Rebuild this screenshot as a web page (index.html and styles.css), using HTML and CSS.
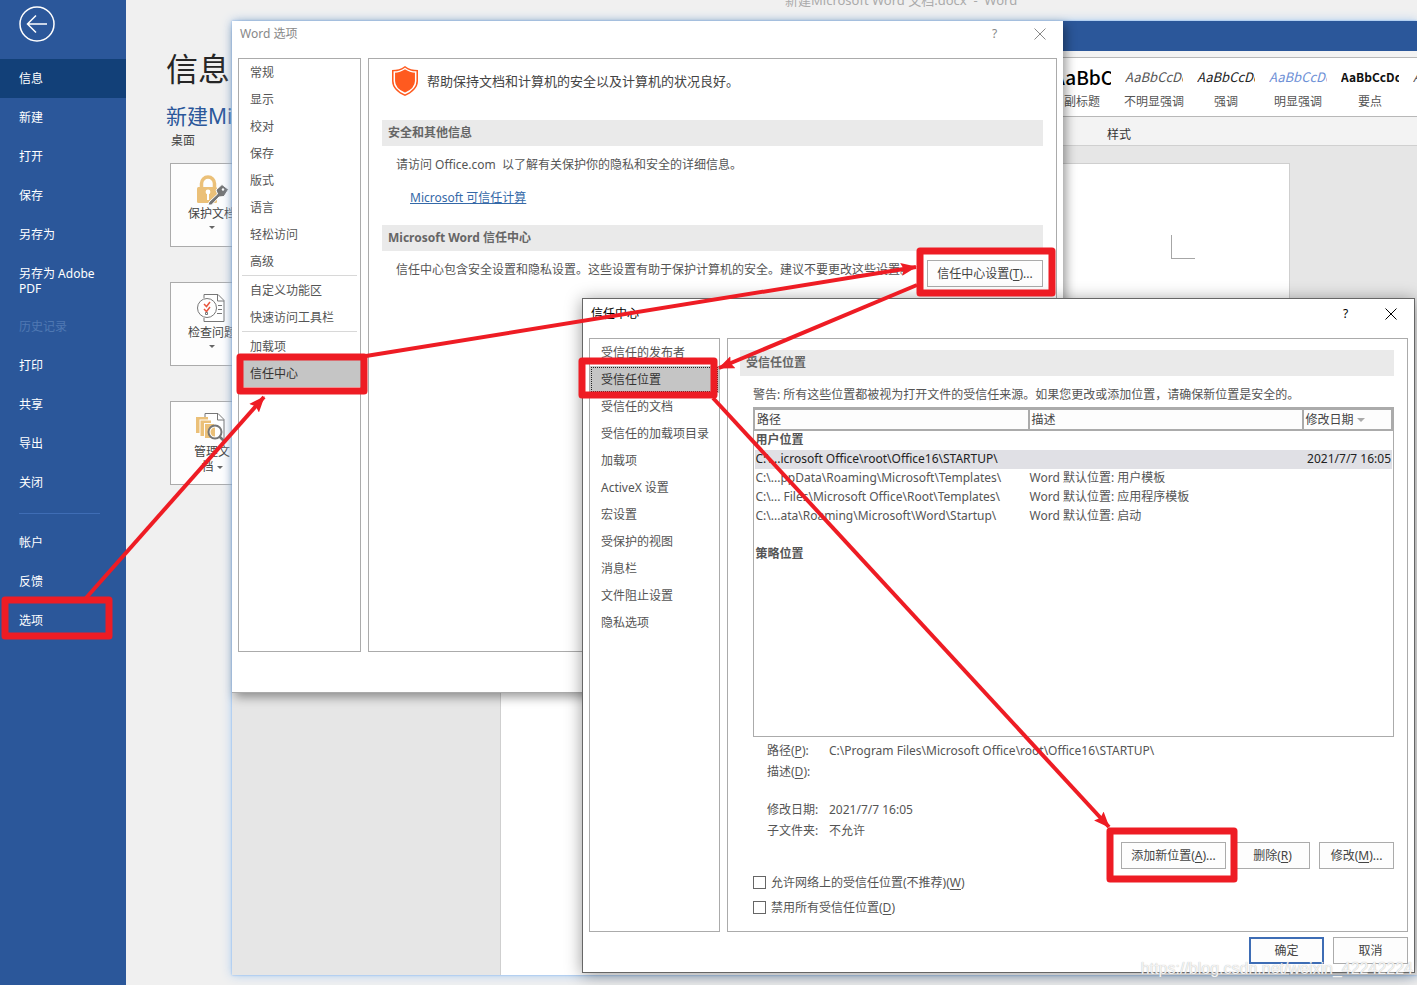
FILE: index.html
```html
<!DOCTYPE html>
<html lang="zh-CN">
<head>
<meta charset="utf-8">
<title>Word 选项</title>
<link rel="stylesheet" href="styles.css">
</head>
<body>
<div class="screen">
  <nav class="sidebar">
    <button class="back" aria-label="返回">
      <svg width="36" height="36" viewBox="0 0 36 36" fill="none" stroke="#fff" stroke-width="1.5"><circle cx="18" cy="18" r="17"/><path d="M28 18H9M17 9.500L8.500 18L17 26.500"/></svg>
    </button>
    <a class="side-item current" href="#">信息</a>
    <a class="side-item" href="#">新建</a>
    <a class="side-item" href="#">打开</a>
    <a class="side-item" href="#">保存</a>
    <a class="side-item" href="#">另存为</a>
    <a class="side-item tall" href="#">另存为 Adobe PDF</a>
    <a class="side-item disabled" href="#">历史记录</a>
    <a class="side-item" href="#">打印</a>
    <a class="side-item" href="#">共享</a>
    <a class="side-item" href="#">导出</a>
    <a class="side-item" href="#">关闭</a>
    <hr class="side-line">
    <a class="side-item" href="#">帐户</a>
    <a class="side-item" href="#">反馈</a>
    <a class="side-item" href="#">选项</a>
  </nav>

  <main class="info">
    <h1>信息</h1>
    <h2>新建Mi</h2>
    <p class="place">桌面</p>
    <button class="card">
      <svg width="34" height="32" viewBox="0 0 34 32"><path d="M6.500 15V9.500a6.500 6.500 0 0 1 13 0V15" fill="none" stroke="#ebc078" stroke-width="3.500"/><rect x="2" y="13" width="20" height="16" rx="1.500" fill="#ebc078"/><circle cx="13" cy="18" r="2.400" fill="#fff"/><path d="M12 18h2v8h-2z" fill="#fff"/><path d="M14 28l8.500-8-1.500-4 6-5.500 6.500 5-4.500 7-5 0.500-7.500 8H13z" fill="#757575" stroke="#fdfdfd"/><circle cx="28" cy="15.500" r="1.200" fill="#fff"/></svg>
      <span>保护文档</span>
      <i class="caret"></i>
    </button>
    <button class="card">
      <svg width="34" height="32" viewBox="0 0 34 32" fill="none" stroke="#777"><path d="M9 5V1.500h14l6 6V28.500H9V25" fill="#fff"/><path d="M22.500 1.500v6.500H29M23 12.500h4M23 16.500h4M22 20.500h5"/><circle cx="12" cy="15" r="9.500" fill="#fff"/><path d="M9 11l2.500 2.500L15 9M9 16l2.500 2.500L15 14" stroke="#e8573f" stroke-width="1.500"/><path d="M10.500 19.500h2v2h-2z"/></svg>
      <span>检查问题</span>
      <i class="caret"></i>
    </button>
    <button class="card">
      <svg width="34" height="32" viewBox="0 0 34 32"><path d="M10 6V1.500h13l6 6V29" fill="#fff" stroke="#777"/><path d="M22.500 1.500v6.500H29" fill="none" stroke="#777"/><path d="M1 5h12v2.500H4.500V21H1z" fill="#ebc078"/><path d="M5.500 8.500H16V11H9v13H5.500z" fill="#ebc078"/><path d="M10 12h9v14h-9z" fill="#ebc078"/><circle cx="20" cy="20" r="6.500" fill="#fff" stroke="#757575" stroke-width="2"/><path d="M20 15.500a4.500 4.500 0 0 0 0 9z" fill="#ebc078"/><path d="M24.500 24.500l6 6" stroke="#757575" stroke-width="2.500"/></svg>
      <span>管理文<br>档 <i class="caret"></i></span>
    </button>
  </main>

  <div class="doc-title">新建Microsoft Word 文档.docx&nbsp; -&nbsp; Word</div>

  <section class="word-window">
    <div class="word-bar"></div>
    <div class="gallery">
      <div class="style"><span class="sample big">AaBbC</span><span>副标题</span></div>
      <div class="style"><span class="sample subtle">AaBbCcDd</span><span>不明显强调</span></div>
      <div class="style"><span class="sample em">AaBbCcDd</span><span>强调</span></div>
      <div class="style"><span class="sample intense">AaBbCcDd</span><span>明显强调</span></div>
      <div class="style"><span class="sample strong">AaBbCcDd</span><span>要点</span></div>
      <div class="style"><span class="sample subtle">A</span></div>
    </div>
    <div class="group-name">样式</div>
    <div class="canvas"><div class="paper"><i class="corner"></i></div></div>
  </section>

  <section class="dialog options" aria-label="Word 选项">
    <header class="title muted">
      <span>Word 选项</span>
      <button class="win-btn" aria-label="帮助">?</button>
      <button class="win-btn" aria-label="关闭"><svg width="12" height="12" viewBox="0 0 12 12" stroke="currentColor"><path d="M0.500 0.500l11 11M11.500 0.500l-11 11"/></svg></button>
    </header>
    <div class="columns">
      <nav class="list">
        <a href="#">常规</a><a href="#">显示</a><a href="#">校对</a><a href="#">保存</a><a href="#">版式</a><a href="#">语言</a><a href="#">轻松访问</a><a href="#">高级</a>
        <hr>
        <a href="#">自定义功能区</a><a href="#">快速访问工具栏</a>
        <hr>
        <a href="#">加载项</a><a href="#" class="selected">信任中心</a>
      </nav>
      <div class="pane">
        <div class="intro">
          <svg width="28" height="32" viewBox="0 0 28 32"><path d="M14 1C10 4 6 5 1 5v11c0 7 6 12 13 15c7-3 13-8 13-15V5C22 5 18 4 14 1z" fill="#ff5a1f"/><path d="M14 3.500C10.500 6 7 7 3.300 7v9c0 6 5 10 10.700 12.500c5.700-2.500 10.700-6.500 10.700-12.500V7C21 7 17.500 6 14 3.500z" fill="none" stroke="#fff" stroke-width="1.500"/></svg>
          <span>帮助保持文档和计算机的安全以及计算机的状况良好。</span>
        </div>
        <h3>安全和其他信息</h3>
        <p class="note">请访问 Office.com&nbsp; 以了解有关保护你的隐私和安全的详细信息。</p>
        <p class="link-row"><a href="#">Microsoft 可信任计算</a></p>
        <h3>Microsoft Word 信任中心</h3>
        <div class="trust-row">
          <p>信任中心包含安全设置和隐私设置。这些设置有助于保护计算机的安全。建议不要更改这些设置。</p>
          <button class="btn">信任中心设置(<u>T</u>)...</button>
        </div>
      </div>
    </div>
  </section>

  <section class="dialog trust" aria-label="信任中心">
    <header class="title">
      <span>信任中心</span>
      <button class="win-btn" aria-label="帮助">?</button>
      <button class="win-btn" aria-label="关闭"><svg width="12" height="12" viewBox="0 0 12 12" stroke="currentColor"><path d="M0.500 0.500l11 11M11.500 0.500l-11 11"/></svg></button>
    </header>
    <div class="columns">
      <nav class="list">
        <a href="#">受信任的发布者</a><a href="#" class="selected focus">受信任位置</a><a href="#">受信任的文档</a><a href="#">受信任的加载项目录</a><a href="#">加载项</a><a href="#">ActiveX 设置</a><a href="#">宏设置</a><a href="#">受保护的视图</a><a href="#">消息栏</a><a href="#">文件阻止设置</a><a href="#">隐私选项</a>
      </nav>
      <div class="pane">
        <h3>受信任位置</h3>
        <div class="locations">
          <p class="warning">警告: 所有这些位置都被视为打开文件的受信任来源。如果您更改或添加位置，请确保新位置是安全的。</p>
          <div class="table-box">
            <table>
              <colgroup><col class="c-path"><col class="c-desc"><col></colgroup>
              <thead><tr><th>路径</th><th>描述</th><th>修改日期 <i class="caret"></i></th></tr></thead>
              <tbody>
                <tr class="group"><td colspan="3">用户位置</td></tr>
                <tr class="picked"><td>C:\...icrosoft Office\root\Office16\STARTUP\</td><td></td><td>2021/7/7 16:05</td></tr>
                <tr><td>C:\...ppData\Roaming\Microsoft\Templates\</td><td>Word 默认位置: 用户模板</td><td></td></tr>
                <tr><td>C:\... Files\Microsoft Office\Root\Templates\</td><td>Word 默认位置: 应用程序模板</td><td></td></tr>
                <tr><td>C:\...ata\Roaming\Microsoft\Word\Startup\</td><td>Word 默认位置: 启动</td><td></td></tr>
                <tr><td colspan="3">&nbsp;</td></tr>
                <tr class="group"><td colspan="3">策略位置</td></tr>
              </tbody>
            </table>
          </div>
          <dl class="details">
            <dt>路径(<u>P</u>):</dt><dd>C:\Program Files\Microsoft Office\root\Office16\STARTUP\</dd>
            <dt>描述(<u>D</u>):</dt><dd></dd>
            <dt class="spaced">修改日期:</dt><dd class="spaced">2021/7/7 16:05</dd>
            <dt>子文件夹:</dt><dd>不允许</dd>
          </dl>
          <div class="actions">
            <button class="btn add">添加新位置(<u>A</u>)...</button>
            <button class="btn">删除(<u>R</u>)</button>
            <button class="btn">修改(<u>M</u>)...</button>
          </div>
          <label class="check"><input type="checkbox"><span>允许网络上的受信任位置(不推荐)(<u>W</u>)</span></label>
          <label class="check"><input type="checkbox"><span>禁用所有受信任位置(<u>D</u>)</span></label>
        </div>
      </div>
    </div>
    <footer class="foot">
      <button class="btn primary">确定</button>
      <button class="btn">取消</button>
    </footer>
  </section>

  <svg class="marks" width="1417" height="985" viewBox="0 0 1417 985">
    <defs><marker id="head" markerUnits="userSpaceOnUse" markerWidth="18" markerHeight="16" refX="15" refY="7" orient="auto"><path d="M0 0.500L16 7L0 13.500L2.500 7z" fill="#ee1c24"/></marker></defs>
    <g fill="none" stroke="#ee1c24" stroke-width="4">
      <path d="M86 598L264 397" marker-end="url(#head)"/>
      <path d="M366 356L916 267" marker-end="url(#head)"/>
      <path d="M917 285L719 368" marker-end="url(#head)"/>
      <path d="M713 398L1109 827" marker-end="url(#head)"/>
    </g>
    <g fill="none" stroke="#ee1c24" stroke-width="7" stroke-linejoin="round">
      <rect x="5" y="600" width="104" height="36"/>
      <rect x="240" y="357" width="124" height="34"/>
      <rect x="920" y="251" width="132" height="42"/>
      <rect x="582" y="361" width="132" height="34"/>
      <rect x="1110" y="831" width="124" height="48"/>
    </g>
  </svg>
  <div class="watermark">https://blog.csdn.net/weixin_42242224</div>
</div>
</body>
</html>
```
FILE: styles.css
```css
* { box-sizing: border-box; }
body {
  margin: 0;
  background: #fff;
  color: #555;
  font: 12px/16px "Noto Sans", "Noto Sans CJK SC", sans-serif;
}
h1, h2, h3, p, dl, dd { margin: 0; }
button { font: inherit; color: inherit; padding: 0; border: 0; background: none; }
a { color: inherit; text-decoration: none; }
u { text-underline-offset: 2px; }

.screen {
  position: relative;
  display: flex;
  margin: 0 5px 3px 0;
  min-height: calc(100vh - 3px);
  background: #f0f0f0;
  overflow: hidden;
}

/* Backstage navigation */
.sidebar { width: 126px; flex: none; background: #2b579a; color: #fff; }
.back { display: block; width: 36px; height: 36px; margin: 6px 0 17px 19px; }
.back svg { display: block; }
.side-item { display: block; padding: 12px 16px 11px 19px; }
.side-item.current { background: #124078; }
.side-item.tall { line-height: 15px; }
.side-item.disabled { color: #5079b3; }
.side-line { height: 1px; margin: 11px 26px 9px 19px; border: 0; background: #3f6db5; }

/* Info page */
.info { flex: 1; padding: 46px 0 0 40px; color: #444; }
h1 { font-size: 32px; font-weight: 400; line-height: 46px; color: #262626; }
h2 { font-size: 21px; font-weight: 400; line-height: 32px; margin-top: 8px; color: #2b579a; }
.place { margin: 1px 0 0 5px; }
.card {
  display: flex;
  flex-direction: column;
  align-items: center;
  width: 84px;
  height: 84px;
  margin: 0 0 35px 4px;
  padding-top: 10px;
  border: 1px solid #ababab;
  background: #fdfdfd;
  line-height: 15px;
}
.place + .card { margin-top: 14px; }
.card svg { flex: none; }
.card .caret { margin-top: 5px; }
.caret {
  display: inline-block;
  border: 3px solid transparent;
  border-top-color: #666;
  border-bottom: 0;
  vertical-align: middle;
}
.card span .caret { margin-top: 0; }
.doc-title {
  position: absolute;
  top: -9px;
  left: 785px;
  font-size: 13px;
  line-height: 18px;
  color: #aaa;
}

/* Document window */
.word-window {
  position: absolute;
  inset: 21px 0 10px 232px;
  display: flex;
  flex-direction: column;
  background: #f3f3f3;
  box-shadow: 0 0 2px #7db4f5, 0 0 10px #a9c9ee;
}
.word-bar { height: 30px; background: #2b579a; }
.gallery {
  display: flex;
  height: 60px;
  margin-top: 6px;
  padding: 9px 0 0 814px;
  border: solid #b8b8b8;
  border-width: 1px 0;
  background: #fff;
  overflow: hidden;
}
.style { display: flex; flex-direction: column; align-items: center; flex: none; width: 72px; }
.sample {
  width: 58px;
  line-height: 20px;
  margin-bottom: 7px;
  font-family: "Noto Sans CJK SC", sans-serif;
  font-size: 13px;
  overflow: hidden;
  color: #222;
}
.sample.big { font-size: 19px; color: #000; font-weight: 500; }
.sample.subtle { font-style: italic; color: #555; }
.sample.em { font-style: italic; }
.sample.intense { font-style: italic; color: #6d8fd6; }
.sample.strong { font-weight: 700; font-size: 12px; color: #111; }
.group-name { padding: 10px 0 2px 875px; border-bottom: 1px solid #d0d0d0; color: #333; }
.canvas { flex: 1; display: flex; background: #e6e6e6; padding: 17px 127px 0 268px; }
.paper { flex: 1; display: flex; justify-content: flex-end; border: 1px solid #cfcfcf; border-bottom: 0; background: #fff; padding: 71px 94px 0 0; }
.corner { width: 24px; height: 24px; border: solid #a6a6a6; border-width: 0 0 1px 1px; }

/* Dialogs */
.dialog {
  position: absolute;
  display: flex;
  flex-direction: column;
  background: #fff;
}
.options {
  left: 232px;
  top: 21px;
  width: 831px;
  height: 672px;
  padding: 0 6px 40px;
  border-bottom: 1px solid #aaa;
  box-shadow: 3px 4px 10px rgba(0, 0, 0, .4);
}
.trust {
  left: 582px;
  top: 298px;
  width: 833px;
  height: 675px;
  padding: 0 6px 8px;
  border: 1px solid #666;
  box-shadow: 0 2px 16px rgba(0, 0, 0, .4);
}
.title { display: flex; align-items: center; height: 37px; flex: none; padding: 0 2px; color: #000; }
.title span { flex: 1; }
.options .title { padding-bottom: 12px; }
.trust .title { height: 39px; padding-bottom: 10px; }
.title.muted { color: #888; }
.win-btn { width: 45px; height: 24px; }
.win-btn:last-child { margin-right: -7px; }
.win-btn svg { display: block; margin: auto; }
.columns { flex: 1; display: flex; gap: 7px; min-height: 0; }
.list, .pane { border: 1px solid #ababab; }
.list { width: 123px; flex: none; }
.trust .list { width: 131px; }
.list a { display: block; padding: 6px 10px 5px 11px; }
.list hr { height: 1px; margin: 0 3px 1px; border: 0; background: #d8d8d8; }
.list .selected { background: #c5c5c5; color: #333; }
.list .focus { outline: 1px dotted #222; outline-offset: -2px; }
.pane { flex: 1; min-width: 0; padding: 0 13px; }
.trust .pane { padding-top: 11px; padding-left: 12px; }
.intro { display: flex; align-items: center; gap: 8px; padding: 6px 0 0 9px; font-size: 13px; color: #444; }
h3 { font-size: 12px; line-height: 16px; font-weight: 700; padding: 5px 6px; background: #eaeaea; color: #666; }
.intro + h3 { margin-top: 23px; }
.note { padding: 11px 14px 0; }
.link-row { padding: 17px 28px 19px; }
.link-row a { color: #3569a8; text-decoration: underline; }
.trust-row { display: flex; align-items: flex-start; padding-left: 14px; }
.trust-row p { flex: 1; padding-top: 11px; white-space: nowrap; }
.btn { height: 27px; min-width: 75px; border: 1px solid #ababab; background: #fdfdfd; color: #444; white-space: nowrap; }
.trust-row .btn { width: 116px; margin-top: 9px; }

/* Trusted locations */
.locations { padding-left: 13px; }
.warning { padding: 11px 0 4px; white-space: nowrap; }
.table-box { height: 330px; border: 1px solid #ababab; }
table { width: 100%; table-layout: fixed; border-collapse: collapse; }
.c-path, .c-desc { width: 274px; }
th { height: 21px; padding: 0 2px; border: 2px solid #ababab; background: #fdfdfd; text-align: left; font-weight: 400; color: #444; line-height: 16px; }
thead th:first-child { border-left-width: 1px; }
th .caret { border-width: 4px 4px 0; border-top-color: #aaa; }
td { height: 19px; padding: 1px 1px 2px; line-height: 16px; white-space: nowrap; }
td:last-child { text-align: right; }
.group td { font-weight: 700; text-align: left; }
.picked { background: #e0e0e5; color: #222; }
.details { display: grid; grid-template-columns: 62px 1fr; line-height: 21px; padding: 3px 0 0 14px; }
.details dt, .details dd { min-height: 21px; }
.details .spaced { margin-top: 17px; }
.actions { display: flex; justify-content: flex-end; gap: 9px; margin-top: 1px; }
.btn.add { width: 105px; }
.check { display: flex; align-items: center; gap: 5px; height: 25px; }
.actions + .check { margin-top: 1px; }
.check input { appearance: none; width: 13px; height: 13px; margin: 0; border: 1px solid #666; background: #fff; }
.foot { display: flex; justify-content: flex-end; gap: 9px; padding-top: 5px; }
.primary { border: 2px solid #3e6db5; }

/* Annotations */
.marks { position: absolute; left: 0; top: 0; }
.watermark {
  position: absolute;
  right: 4px;
  bottom: 7px;
  font: 16px/18px "Liberation Sans", sans-serif;
  color: rgba(255, 255, 255, .85);
  text-shadow: 0 0 1px #aaa;
}
```
